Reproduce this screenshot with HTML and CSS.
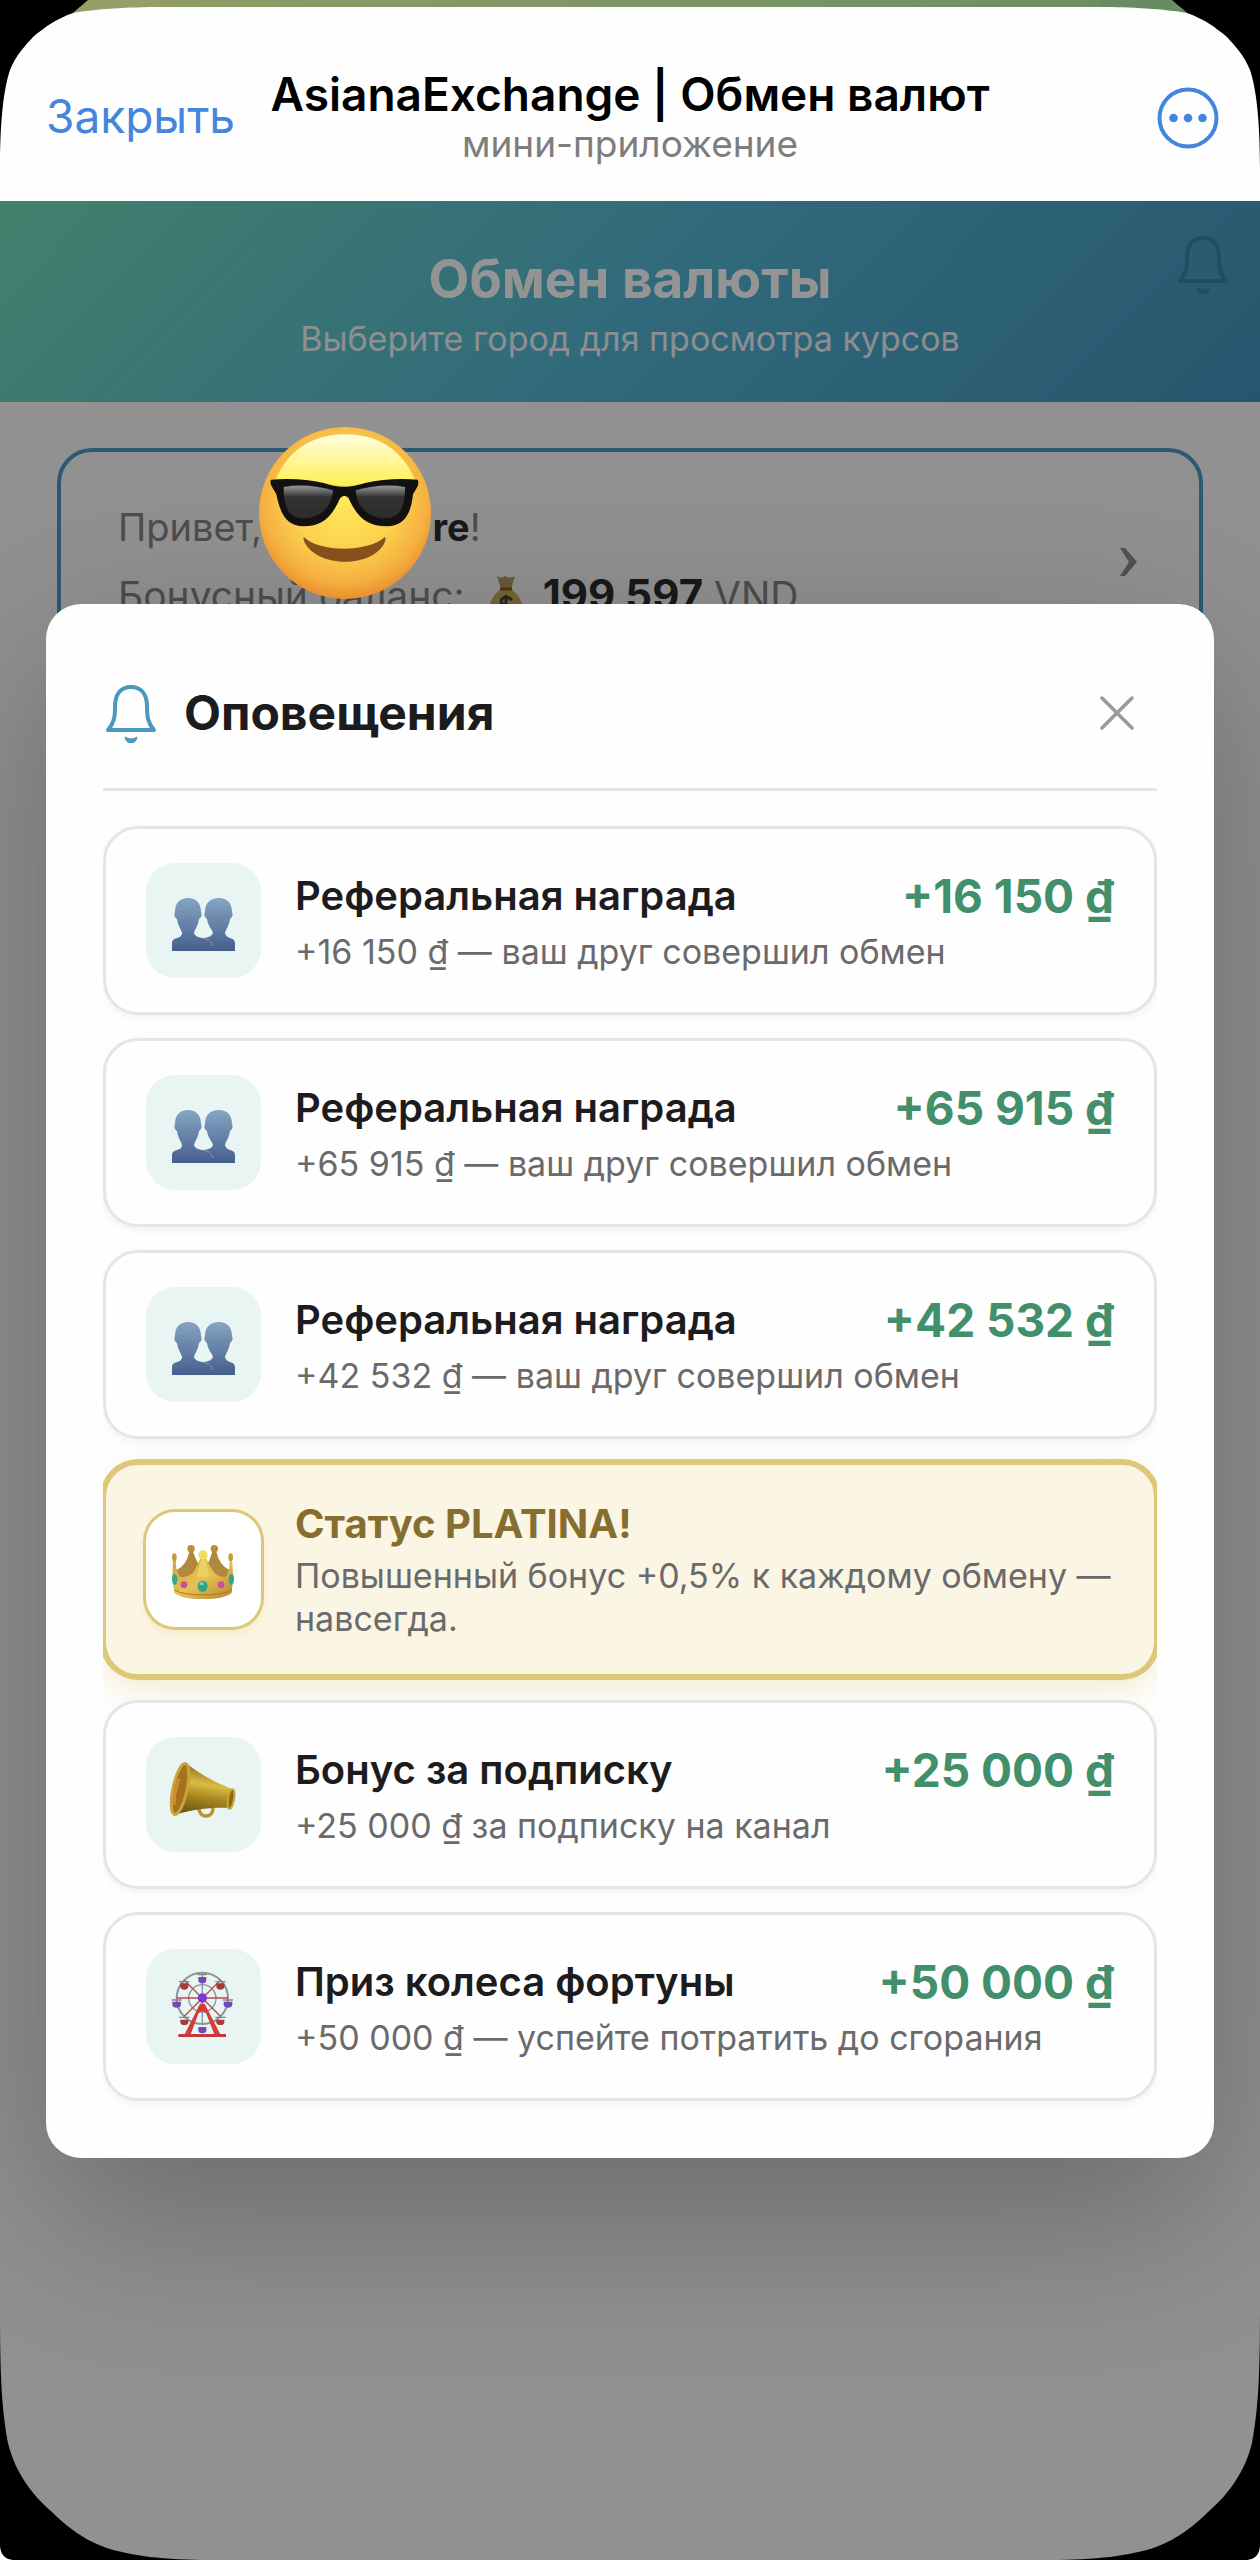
FILE: index.html
```html
<!DOCTYPE html>
<html lang="ru">
<head>
    <meta charset="UTF-8">
    <meta name="viewport" content="width=device-width, initial-scale=1.0">
    <title>AsianaExchange | Обмен валют</title>
    <link rel="stylesheet" href="styles.css">
</head>
<body>

    <!-- общие иконки -->
    <svg class="sprite" aria-hidden="true">
        <defs>
            <linearGradient id="peopleFill" x1="0" y1="0" x2="0" y2="1">
                <stop offset="0" stop-color="#86a5c3"/>
                <stop offset="1" stop-color="#455f8c"/>
            </linearGradient>
        </defs>
        <symbol id="bell" viewBox="0 0 56 60">
            <path d="M5 47 C11 40 12 34 12 24 C12 11 18 4 28 4 C38 4 44 11 44 24 C44 34 45 40 51 47 Z" fill="none" stroke="currentColor" stroke-width="4" stroke-linejoin="round"/>
            <path d="M22 54 Q25 56 28 56 Q31 56 34 54 Q33 60 28 60 Q23 60 22 54 Z" fill="currentColor" stroke="currentColor"/>
        </symbol>
        <symbol id="people" viewBox="0 0 115 115">
            <path d="M49 88 V80 Q50 76 58 75 Q66 74 67 70 C66 66 62 63 61 56 C58 54 58 51 59 49 C59 40 64 35 73 35 C81 35 86 40 86 49 C87 51 87 54 84 56 C83 63 80 66 79 70 Q80 74 84 75 Q89 76 89 80 V88 Z" fill="url(#peopleFill)"/>
            <path d="M26 88 V80 Q26 76 31 75 Q36 74 36 70 C35 66 32 63 31 56 C28 54 28 51 29 49 C29 40 34 35 42 35 C50 35 55 40 55 49 C56 51 56 54 53 56 C52 63 49 66 48 70 Q49 74 56 75 Q64 76 67 83 V88 Z" fill="url(#peopleFill)"/>
            <path d="M57 75 Q65 76 67 83" fill="none" stroke="#7e96b6" stroke-width="1"/>
        </symbol>
        <symbol id="frame-top" viewBox="0 0 160 170">
            <path d="M88 0 L73 13 C95 9 130 7 160 7 V0 Z" fill="currentColor"/>
            <path d="M0 0 H88 L73 13 C56 19 45 27 33 37 C25 46 16 55 10 70 C4 88 0 118 0 170 Z" fill="#000"/>
        </symbol>
        <symbol id="frame-bottom" viewBox="0 0 210 260">
            <path d="M0 0 C0 70 1 105 8 143 C15 172 32 195 52 212 C68 228 85 240 104 247 C130 256 165 260 210 260 H0 Z" fill="#000"/>
            <path d="M0 246 Q1 259 13 260 H0 Z" fill="#fff"/>
        </symbol>
    </svg>

    <header class="topbar">
        <button class="topbar-close" type="button">Закрыть</button>
        <div class="topbar-title">
            <h1>AsianaExchange | Обмен валют</h1>
            <p>мини-приложение</p>
        </div>
        <button class="topbar-more" type="button" aria-label="Меню">
            <svg viewBox="0 0 62 62">
                <circle cx="31" cy="31" r="28.5" fill="none" stroke="currentColor" stroke-width="4"/>
                <circle cx="16.500" cy="31" r="4.300" fill="currentColor"/>
                <circle cx="31" cy="31" r="4.300" fill="currentColor"/>
                <circle cx="45.500" cy="31" r="4.300" fill="currentColor"/>
            </svg>
        </button>
    </header>

    <main class="app">
        <section class="hero">
            <h2>Обмен валюты</h2>
            <p>Выберите город для просмотра курсов</p>
            <button class="hero-bell" type="button" aria-label="Оповещения">
                <svg><use href="#bell"/></svg>
            </button>
        </section>

        <section class="greeting">
            <div>
                <p>Привет, <b class="user-name">re</b>!</p>
                <p class="balance">Бонусный баланс:
                    <svg class="money" viewBox="0 0 36 44">
                        <path d="M9 1 Q13 4 17 1 Q22 4 27 1 L23 14 H13 Z" fill="#b99a5a"/>
                        <path d="M13 14 H23 C32 20 37 31 34 40 Q31 44 18 44 Q5 44 2 40 C-1 31 4 20 13 14 Z" fill="#cbad62"/>
                        <path d="M12 14 H24" stroke="#8a5a24" stroke-width="3"/>
                        <path d="M24 25 Q18 20 14 24 Q11 29 18 30 Q26 32 23 36 Q18 40 12 35 M18 20 V41" fill="none" stroke="#443" stroke-width="3"/>
                    </svg>
                    <b>199 597</b> VND</p>
            </div>
            <svg class="chevron" viewBox="0 0 20 30"><path d="M1 1 H6 L18 15 L6 29 H1 L10 15 Z" fill="currentColor"/></svg>
        </section>

        <div class="overlay">
            <div class="modal" role="dialog" aria-labelledby="modalTitle">
                <div class="modal-header">
                    <svg class="modal-bell"><use href="#bell"/></svg>
                    <h2 id="modalTitle">Оповещения</h2>
                    <button class="modal-close" type="button" aria-label="Закрыть">
                        <svg viewBox="0 0 34 34"><path d="M2 2 L32 32 M32 2 L2 32" stroke="currentColor" stroke-width="3.500" stroke-linecap="round"/></svg>
                    </button>
                </div>

                <ul class="notices">
                    <li class="notice">
                        <div class="notice-icon"><svg><use href="#people"/></svg></div>
                        <div class="notice-body">
                            <div class="notice-row">
                                <h3>Реферальная награда</h3>
                                <span class="amount">+16 150 ₫</span>
                            </div>
                            <p>+16 150 ₫ — ваш друг совершил обмен</p>
                        </div>
                    </li>
                    <li class="notice">
                        <div class="notice-icon"><svg><use href="#people"/></svg></div>
                        <div class="notice-body">
                            <div class="notice-row">
                                <h3>Реферальная награда</h3>
                                <span class="amount">+65 915 ₫</span>
                            </div>
                            <p>+65 915 ₫ — ваш друг совершил обмен</p>
                        </div>
                    </li>
                    <li class="notice">
                        <div class="notice-icon"><svg><use href="#people"/></svg></div>
                        <div class="notice-body">
                            <div class="notice-row">
                                <h3>Реферальная награда</h3>
                                <span class="amount">+42 532 ₫</span>
                            </div>
                            <p>+42 532 ₫ — ваш друг совершил обмен</p>
                        </div>
                    </li>
                    <li class="notice platina">
                        <div class="notice-icon">
                            <svg viewBox="33 36 345 345">
                                <defs>
                                    <linearGradient id="gold" x1="0" y1="0" x2="1" y2="1">
                                        <stop offset="0" stop-color="#d3a13b"/>
                                        <stop offset=".5" stop-color="#e6c355"/>
                                        <stop offset="1" stop-color="#b1842d"/>
                                    </linearGradient>
                                </defs>
                                <path d="M125 210 Q155 195 163 155 H174 Q182 180 197 202 L212 202 Q225 180 232 155 H244 Q253 195 283 210 L270 242 H135 Z" fill="#b1893a"/>
                                <circle cx="168" cy="146" r="11" fill="#b98d3a"/>
                                <circle cx="238" cy="146" r="11" fill="#b98d3a"/>
                                <path d="M114 180 H122 Q122 215 136 230 Q170 235 184 200 L196 176 H214 L226 200 Q242 235 274 230 Q284 215 284 180 H291 L295 230 L290 278 Q270 297 204 297 Q137 297 118 278 L112 230 Z" fill="url(#gold)"/>
                                <ellipse cx="118" cy="172" rx="7" ry="12" fill="#c99a3a"/>
                                <ellipse cx="287" cy="172" rx="7" ry="12" fill="#c99a3a"/>
                                <circle cx="204" cy="165" r="14" fill="#f2dc62"/>
                                <path d="M198 178 L184 230 H222 L212 178 Z" fill="#ecd060"/>
                                <path d="M119 270 Q140 284 204 285 Q268 284 290 270" fill="none" stroke="#a87b29" stroke-width="3"/>
                                <ellipse cx="119" cy="238" rx="8" ry="17" fill="#35a68c"/>
                                <ellipse cx="289" cy="238" rx="8" ry="17" fill="#35a68c"/>
                                <ellipse cx="203" cy="259" rx="15" ry="17" fill="#2fa588"/>
                                <ellipse cx="200" cy="251" rx="7" ry="5" fill="#7fd0bb"/>
                                <circle cx="147" cy="254" r="10" fill="#cb4f9f"/>
                                <circle cx="258" cy="254" r="10" fill="#cb4f9f"/>
                            </svg>
                        </div>
                        <div class="notice-body">
                            <h3>Статус PLATINA!</h3>
                            <p>Повышенный бонус +0,5% к каждому обмену — навсегда.</p>
                        </div>
                    </li>
                    <li class="notice">
                        <div class="notice-icon">
                            <svg viewBox="0 0 115 115">
                                <defs>
                                    <linearGradient id="brass" x1=".3" y1="0" x2=".1" y2="1">
                                        <stop offset="0" stop-color="#8a6a16"/>
                                        <stop offset=".35" stop-color="#d9bd45"/>
                                        <stop offset=".6" stop-color="#a8861f"/>
                                        <stop offset="1" stop-color="#5f4c10"/>
                                    </linearGradient>
                                </defs>
                                <circle cx="60" cy="72" r="7" fill="none" stroke="#b8952f" stroke-width="3.500"/>
                                <path d="M40 26 C52 36 68 45 86 52 Q88 60 84 71 C66 70 48 72 28 78 Z" fill="url(#brass)"/>
                                <ellipse cx="34" cy="52" rx="7" ry="26" transform="rotate(12 34 52)" fill="#a4721d" stroke="#c9a43a" stroke-width="3"/>
                                <path d="M33 42 Q28 56 28 68" fill="none" stroke="#d08b35" stroke-width="3"/>
                                <ellipse cx="85" cy="62" rx="3" ry="10" transform="rotate(10 85 62)" fill="#8a6a16" stroke="#c7a63c" stroke-width="2"/>
                            </svg>
                        </div>
                        <div class="notice-body">
                            <div class="notice-row">
                                <h3>Бонус за подписку</h3>
                                <span class="amount">+25 000 ₫</span>
                            </div>
                            <p>+25 000 ₫ за подписку на канал</p>
                        </div>
                    </li>
                    <li class="notice">
                        <div class="notice-icon">
                            <svg viewBox="33 24 345 345">
                                <g fill="none" stroke="#8c9399">
                                    <circle cx="202" cy="172" r="77" stroke-width="6"/>
                                    <circle cx="202" cy="172" r="41" stroke-width="4"/>
                                    <path d="M202 95 V250" stroke-width="4"/>
                                </g>
                                <path d="M125 171 H280 M148 118 L256 226 M256 118 L148 226" stroke="#bb4a50" stroke-width="4"/>
                                <path d="M195 188 H209 L256 280 H238 L214 218 Q202 204 190 218 L167 280 H149 Z" fill="#d23c3b"/>
                                <path d="M130 279 H273 V288 H130 Z" fill="#c6383a"/>
                                <g fill="#7349b3">
                                    <path d="M190 108 H214 V119 Q212 127 202 127 Q192 127 190 119 Z"/>
                                    <path d="M190 258 H214 V269 Q212 277 202 277 Q192 277 190 269 Z"/>
                                    <path d="M112 182 H138 V192 Q136 200 125 200 Q114 200 112 192 Z"/>
                                    <path d="M266 182 H292 V192 Q290 200 279 200 Q268 200 266 192 Z"/>
                                </g>
                                <g fill="#a8393c">
                                    <path d="M136 127 H160 V138 Q158 146 148 146 Q138 146 136 138 Z"/>
                                    <path d="M244 127 H268 V138 Q266 146 256 146 Q246 146 244 138 Z"/>
                                    <path d="M136 236 H160 V245 Q158 252 148 252 Q138 252 136 245 Z"/>
                                    <path d="M244 236 H268 V245 Q266 252 256 252 Q246 252 244 245 Z"/>
                                </g>
                                <path d="M132 122 H163 M241 122 H272 M132 229 H163 M241 229 H272 M110 177 H140 M264 177 H294 M188 101 H216" stroke="#8f7f84" stroke-width="4"/>
                                <circle cx="202" cy="171" r="14" fill="#7a37d9"/>
                            </svg>
                        </div>
                        <div class="notice-body">
                            <div class="notice-row">
                                <h3>Приз колеса фортуны</h3>
                                <span class="amount">+50 000 ₫</span>
                            </div>
                            <p>+50 000 ₫ — успейте потратить до сгорания</p>
                        </div>
                    </li>
                </ul>
            </div>
        </div>

        <!-- стикер поверх имени -->
        <svg class="sticker" viewBox="56 48 516 516" aria-hidden="true">
            <defs>
                <radialGradient id="face" cx=".5" cy=".42" r=".6">
                    <stop offset="0" stop-color="#ffe95a"/>
                    <stop offset=".5" stop-color="#fbd24e"/>
                    <stop offset=".8" stop-color="#f5b040"/>
                    <stop offset="1" stop-color="#e8892a"/>
                </radialGradient>
                <linearGradient id="shine" x1="0" y1="0" x2="0" y2="1">
                    <stop offset="0" stop-color="#fffde0"/>
                    <stop offset="1" stop-color="#fff04e"/>
                </linearGradient>
                <linearGradient id="lens" x1="0" y1="0" x2="0" y2="1">
                    <stop offset="0" stop-color="#9a9a9a"/>
                    <stop offset=".35" stop-color="#333"/>
                    <stop offset="1" stop-color="#2b2b2b"/>
                </linearGradient>
            </defs>
            <circle cx="314" cy="306" r="258" fill="url(#face)"/>
            <path d="M105 210 C140 120 215 70 315 70 C415 70 490 120 525 210 Q420 200 314 228 Q210 200 105 210 Z" fill="url(#shine)"/>
            <path d="M92 206 Q180 200 250 216 Q310 238 375 216 Q445 200 532 206 Q536 214 532 226 L518 250 C512 310 490 346 440 346 C380 346 350 318 325 262 Q312 246 299 262 C275 318 245 346 190 346 C140 346 120 310 108 250 L94 226 Q88 214 92 206 Z" fill="#111"/>
            <path d="M130 228 Q200 216 278 238 C276 290 235 322 190 322 C145 322 130 290 130 228 Z" fill="url(#lens)"/>
            <path d="M494 228 Q424 216 346 238 C348 290 389 322 434 322 C479 322 494 290 494 228 Z" fill="url(#lens)"/>
            <path d="M190 378 C240 425 380 425 434 378 Q438 382 434 392 C400 472 230 472 192 392 Q188 382 190 378 Z" fill="#85501a"/>
        </svg>
    </main>

    <svg class="corner top-left"><use href="#frame-top"/></svg>
    <svg class="corner top-right"><use href="#frame-top"/></svg>
    <svg class="corner bottom-left"><use href="#frame-bottom"/></svg>
    <svg class="corner bottom-right"><use href="#frame-bottom"/></svg>

</body>
</html>
```

FILE: styles.css
```css
* {
    box-sizing: border-box;
    margin: 0;
    padding: 0;
}

body {
    font-family: Inter, 'Liberation Sans', sans-serif;
    background: #fafafa;
    color: #1c1c1e;
    display: flex;
    flex-direction: column;
    min-height: 100vh;
    position: relative;
}

button {
    font: inherit;
    color: inherit;
    background: none;
    border: none;
    cursor: pointer;
}

svg {
    display: block;
}

.sprite {
    position: absolute;
    width: 0;
    height: 0;
}

/* шапка мини-приложения */
.topbar {
    display: grid;
    grid-template-columns: 1fr auto 1fr;
    align-items: center;
    padding: 68px 41px 34px;
    background: linear-gradient(90deg, #959f68, #678c62) top / 100% 7px no-repeat, #fefefe;
}

.topbar-close {
    justify-self: start;
    padding: 0 5px 4px;
    font-size: 46px;
    line-height: 60px;
    color: #4485dd;
}

.topbar-title {
    text-align: center;
}

.topbar-title h1 {
    font-size: 46px;
    font-weight: 600;
    line-height: 52px;
    color: #000;
}

.topbar-title p {
    font-size: 37px;
    line-height: 47px;
    color: #7d7d7d;
}

.topbar-more {
    justify-self: end;
    color: #4485dd;
}

.topbar-more svg {
    width: 62px;
    height: 62px;
}

.app {
    flex: 1;
    position: relative;
}

.hero {
    position: relative;
    padding: 45px 58px 36px;
    text-align: center;
    color: #fff;
    background: linear-gradient(135deg, #72debb 0%, #55b7d5 50%, #4395bd 100%);
}

.hero h2 {
    font-size: 53px;
    font-weight: 700;
    line-height: 66px;
}

.hero p {
    font-size: 34px;
    line-height: 54px;
    opacity: .9;
}

.hero-bell {
    position: absolute;
    top: 33px;
    right: 29px;
    color: #3a86ab;
}

.hero-bell svg,
.modal-bell {
    width: 56px;
    height: 60px;
}

.greeting {
    display: flex;
    align-items: center;
    justify-content: space-between;
    margin: 46px 57px;
    padding: 41px 60px 50px 57px;
    border: 4px solid #4a9cc2;
    border-radius: 35px;
    font-size: 38px;
    line-height: 68px;
    color: #858585;
}

.greeting b {
    color: #2c2c2e;
}

.user-name {
    margin-left: 160px;
}

.balance {
    font-size: 39px;
}

.balance b {
    font-size: 42px;
}

.money {
    display: inline-block;
    width: 36px;
    height: 44px;
    margin: 0 8px 0 12px;
    vertical-align: -9px;
}

.chevron {
    width: 20px;
    height: 30px;
    color: #8c8c8c;
}

.overlay {
    position: absolute;
    inset: 0;
    display: flex;
    align-items: center;
    padding: 0 46px;
    background: rgba(0, 0, 0, .42);
    overflow: hidden;
}

.modal {
    flex: 1;
    padding: 58px 57px 57px;
    border-radius: 35px;
    background: #fefefe;
    box-shadow: 0 59px 176px rgba(0, 0, 0, .27);
}

.modal-header {
    display: flex;
    align-items: center;
    gap: 25px;
    height: 129px;
    margin-bottom: 35px;
    padding-bottom: 24px;
    border-bottom: 3px solid #e5e5e7;
}

.modal-bell {
    color: #4b98bf;
}

.modal-header h2 {
    flex: 1;
    font-size: 48px;
    font-weight: 700;
    line-height: 58px;
}

.modal-close {
    padding: 23px;
    color: #999;
}

.modal-close svg {
    width: 34px;
    height: 34px;
}

/* боковые края обрезаем, чтобы обводка не выходила за список */
.notices {
    display: flex;
    flex-direction: column;
    gap: 23px;
    list-style: none;
    overflow-x: clip;
}

.notice {
    display: flex;
    align-items: center;
    gap: 34px;
    padding: 34px 40px;
    border: 3px solid #e5e5e7;
    border-radius: 35px;
    background: #fefefe;
    box-shadow: 0 3px 9px rgba(0, 0, 0, .05);
}

.notice-icon {
    flex: none;
    width: 115px;
    height: 115px;
    border-radius: 29px;
    background: #e9f5f3;
}

.notice-icon svg {
    width: 115px;
    height: 115px;
}

.notice-body {
    flex: 1;
}

.notice-row {
    display: flex;
    align-items: center;
    justify-content: space-between;
    height: 57px;
}

.notice h3 {
    font-size: 40px;
    font-weight: 600;
    line-height: 49px;
}

.notice p {
    margin-top: 6px;
    font-size: 34px;
    line-height: 43px;
    color: #6a6a6c;
}

.amount {
    font-size: 46px;
    font-weight: 700;
    color: #428f6c;
    white-space: nowrap;
}

.platina {
    padding-right: 32px;
    border-color: #dcc878;
    background: #fbf5e3;
    box-shadow: 0 0 0 3px #dcc878, 0 12px 35px rgba(220, 190, 90, .3);
}

.platina h3 {
    font-weight: 700;
    color: #856e30;
}

.platina .notice-icon {
    background: #fff;
    box-shadow: 0 0 0 3px #dcc878, 0 6px 12px rgba(220, 190, 90, .2);
}

.sticker {
    position: absolute;
    top: 226px;
    left: 259px;
    width: 172px;
    height: 172px;
}

/* скругления экрана */
.corner {
    position: absolute;
    pointer-events: none;
}

.top-left,
.top-right {
    top: 0;
    width: 160px;
    height: 170px;
}

.top-left {
    left: 0;
    color: #959f68;
}

.top-right {
    right: 0;
    color: #678c62;
    transform: scaleX(-1);
}

.bottom-left,
.bottom-right {
    bottom: 0;
    width: 210px;
    height: 260px;
}

.bottom-left {
    left: 0;
}

.bottom-right {
    right: 0;
    transform: scaleX(-1);
}
```
